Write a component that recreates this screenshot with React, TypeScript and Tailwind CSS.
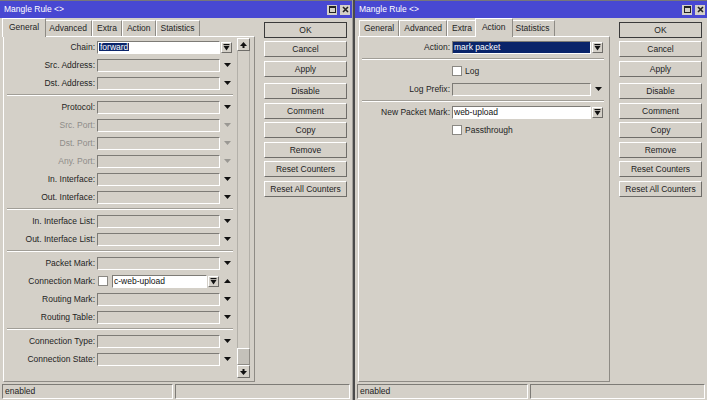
import React from 'react';

type Ctl = 'arrow' | 'arrow-dim' | 'button' | 'up' | 'none';

type Row =
  | { kind: 'field'; label: string; dim?: boolean; control: Ctl; value?: React.ReactNode; white?: boolean; navy?: boolean }
  | { kind: 'conn'; label: string }
  | { kind: 'check'; label: string }
  | { kind: 'div'; h?: string };

const raised = 'border border-t-white border-l-white border-b-[#6f6d69] border-r-[#6f6d69] bg-[#d4d0c8]';
const sunken = 'border border-t-[#7d7b76] border-l-[#7d7b76] border-b-white border-r-white';

const DownArrow = ({ dim }: { dim?: boolean }) => (
  <svg width="7" height="4" viewBox="0 0 7 4">
    <polygon points="0,0 7,0 3.5,4" fill={dim ? '#9a9893' : '#111'} />
  </svg>
);

const UpArrow = () => (
  <svg width="7" height="4" viewBox="0 0 7 4">
    <polygon points="0,4 7,4 3.5,0" fill="#111" />
  </svg>
);

const ComboButton = () => (
  <div className={`mr-[1px] flex h-[11px] w-[11px] items-center justify-center ${raised}`}>
    <svg width="7" height="7" viewBox="0 0 7 7">
      <rect x="0.5" y="0" width="6" height="1.2" fill="#111" />
      <polygon points="0.5,2 6.5,2 3.5,6.5" fill="#111" />
    </svg>
  </div>
);

function Control({ kind }: { kind: Ctl }) {
  if (kind === 'button') return <ComboButton />;
  if (kind === 'none') return null;
  return (
    <span className="flex pr-[2px]">
      {kind === 'up' ? <UpArrow /> : <DownArrow dim={kind === 'arrow-dim'} />}
    </span>
  );
}

const Box = ({ white, navy, children }: { white?: boolean; navy?: boolean; children?: React.ReactNode }) => (
  <div
    className={`flex h-[13px] min-w-0 flex-1 items-center overflow-hidden pl-[1px] ${sunken} ${
      navy ? 'bg-[#0a246a] text-white' : white ? 'bg-white text-[#111]' : 'bg-[#d4d0c8]'
    }`}
  >
    {children}
  </div>
);

const Checkbox = () => <div className="h-[10px] w-[10px] shrink-0 border border-[#8a8883] bg-white" />;

function FormRow({ row }: { row: Row }) {
  if (row.kind === 'div') {
    return (
      <div className={`flex ${row.h ?? 'h-[6px]'} items-center pl-[3px]`}>
        <div className="h-[2px] w-full border-t border-t-[#a19e97] border-b border-b-white" />
      </div>
    );
  }
  if (row.kind === 'check') {
    return (
      <div className="flex h-[18px] items-center pl-[93px]">
        <Checkbox />
        <span className="ml-[3px] text-[#1e1e1e]">{row.label}</span>
      </div>
    );
  }
  const label = (
    <div className={`w-[91px] shrink-0 text-right ${row.kind === 'field' && row.dim ? 'text-[#8e8c88]' : 'text-[#1e1e1e]'}`}>
      {row.label}:
    </div>
  );
  if (row.kind === 'conn') {
    return (
      <div className="flex h-[18px] items-center">
        {label}
        <div className="ml-[3px] flex min-w-0 flex-1 items-center">
          <Checkbox />
          <div className="ml-[4px] flex min-w-0 flex-1 items-center">
            <Box white>c-web-upload</Box>
            <div className="ml-[1px]">
              <ComboButton />
            </div>
          </div>
        </div>
        <div className="flex h-[13px] w-[13px] shrink-0 items-center justify-end">
          <Control kind="up" />
        </div>
      </div>
    );
  }
  return (
    <div className="flex h-[18px] items-center">
      {label}
      <div className="ml-[2px] flex min-w-0 flex-1">
        <Box white={row.white} navy={row.navy}>
          {row.value}
        </Box>
      </div>
      <div className="flex h-[13px] w-[13px] shrink-0 items-center justify-end">
        <Control kind={row.control} />
      </div>
    </div>
  );
}

const generalRows: Row[] = [
  {
    kind: 'field',
    label: 'Chain',
    control: 'button',
    white: true,
    value: <span className="bg-[#0a246a] px-[1px] text-white">forward</span>,
  },
  { kind: 'field', label: 'Src. Address', control: 'arrow' },
  { kind: 'field', label: 'Dst. Address', control: 'arrow' },
  { kind: 'div' },
  { kind: 'field', label: 'Protocol', control: 'arrow' },
  { kind: 'field', label: 'Src. Port', control: 'arrow-dim', dim: true },
  { kind: 'field', label: 'Dst. Port', control: 'arrow-dim', dim: true },
  { kind: 'field', label: 'Any. Port', control: 'arrow-dim', dim: true },
  { kind: 'field', label: 'In. Interface', control: 'arrow' },
  { kind: 'field', label: 'Out. Interface', control: 'arrow' },
  { kind: 'div' },
  { kind: 'field', label: 'In. Interface List', control: 'arrow' },
  { kind: 'field', label: 'Out. Interface List', control: 'arrow' },
  { kind: 'div' },
  { kind: 'field', label: 'Packet Mark', control: 'arrow' },
  { kind: 'conn', label: 'Connection Mark' },
  { kind: 'field', label: 'Routing Mark', control: 'arrow' },
  { kind: 'field', label: 'Routing Table', control: 'arrow' },
  { kind: 'div' },
  { kind: 'field', label: 'Connection Type', control: 'arrow' },
  { kind: 'field', label: 'Connection State', control: 'arrow' },
];

const actionRows: Row[] = [
  { kind: 'field', label: 'Action', control: 'button', navy: true, value: 'mark packet' },
  { kind: 'div' },
  { kind: 'check', label: 'Log' },
  { kind: 'field', label: 'Log Prefix', control: 'arrow' },
  { kind: 'div', h: 'h-[5px]' },
  { kind: 'field', label: 'New Packet Mark', control: 'button', white: true, value: 'web-upload' },
  { kind: 'check', label: 'Passthrough' },
];

const tabs = ['General', 'Advanced', 'Extra', 'Action', 'Statistics'];

const buttons: { label: string; mt: string; primary?: boolean }[] = [
  { label: 'OK', mt: 'mt-[4px]', primary: true },
  { label: 'Cancel', mt: 'mt-[3px]' },
  { label: 'Apply', mt: 'mt-[4px]' },
  { label: 'Disable', mt: 'mt-[6px]' },
  { label: 'Comment', mt: 'mt-[4px]' },
  { label: 'Copy', mt: 'mt-[3px]' },
  { label: 'Remove', mt: 'mt-[4px]' },
  { label: 'Reset Counters', mt: 'mt-[3px]' },
  { label: 'Reset All Counters', mt: 'mt-[4px]' },
];

const ScrollBar = () => (
  <div className="ml-[4px] flex w-[13px] flex-col">
    <div className={`flex h-[13px] items-center justify-center ${raised}`}>
      <svg width="7" height="6" viewBox="0 0 7 6">
        <polygon points="0,4 7,4 3.5,0" fill="#111" />
        <rect x="2.5" y="4" width="2" height="2" fill="#111" />
      </svg>
    </div>
    <div className="flex-1 border-x border-x-[#b3b0a9]" />
    <div className="h-[17px] border border-t-white border-l-white border-b-[#8e8b85] border-r-[#8e8b85] bg-[#c4c1ba]" />
    <div className={`flex h-[13px] items-center justify-center ${raised}`}>
      <svg width="7" height="6" viewBox="0 0 7 6">
        <polygon points="0,2 7,2 3.5,6" fill="#111" />
        <rect x="2.5" y="0" width="2" height="2" fill="#111" />
      </svg>
    </div>
  </div>
);

function Window({ active, rows, scroll }: { active: string; rows: Row[]; scroll?: boolean }) {
  return (
    <div className="flex h-[400px] w-[352px] shrink-0 flex-col">
      {/* Title bar */}
      <div className="flex h-[18px] items-center border-t border-t-[#77767a] bg-[#4848d2] pl-[4px] pr-[2px] text-white">
        <span className="flex-1">Mangle Rule &lt;&gt;</span>
        <div className="flex h-[10px] w-[10px] items-center justify-center bg-[#d4d0c8]">
          <div className="h-[7px] w-[7px] border border-[#222] border-t-2" />
        </div>
        <div className="ml-[3px] flex h-[10px] w-[10px] items-center justify-center bg-[#d4d0c8]">
          <svg width="7" height="7" viewBox="0 0 7 7">
            <path d="M1 1 L6 6 M6 1 L1 6" stroke="#222" strokeWidth="1.6" />
          </svg>
        </div>
      </div>

      {/* Body */}
      <div className="flex h-[365px]">
        <div className="ml-[3px] flex w-[252px] flex-col pb-[1px]">
          <div className="flex h-[18px] items-end pl-[1px] text-[#1e1e1e]">
            {tabs.map((t) =>
              t === active ? (
                <div
                  key={t}
                  className="relative z-10 -mx-[2px] -mb-[1px] flex h-[19px] items-center border-t border-l border-r border-t-white border-l-white border-r-[#8e8b85] bg-[#d4d0c8] px-[6px] pb-[1px]"
                >
                  {t}
                </div>
              ) : (
                <div
                  key={t}
                  className="flex h-[16px] items-center border-t border-l border-r border-t-white border-l-white border-r-[#8e8b85] bg-[#d2cec6] px-[4px]"
                >
                  {t}
                </div>
              )
            )}
          </div>
          <div className="flex flex-1 border border-t-white border-l-white border-b-[#8e8b85] border-r-[#8e8b85] pt-[1px] pb-[3px]">
            <div className={`flex flex-col ${scroll ? 'w-[229px]' : 'w-[245px]'}`}>{rows.map((r, i) => <FormRow key={i} row={r} />)}</div>
            {scroll && <ScrollBar />}
          </div>
        </div>
        <div className="ml-[9px] flex w-[83px] flex-col">
          {buttons.map((b) => (
            <div
              key={b.label}
              className={`${b.mt} flex h-[16px] items-center justify-center text-[#222] ${
                b.primary ? 'border border-[#3a3a3a] bg-[#d4d0c8]' : raised
              }`}
            >
              {b.label}
            </div>
          ))}
        </div>
      </div>

      {/* Status bar */}
      <div className="flex h-[17px] gap-[2px] px-[2px] pt-[1px]">
        <div className={`flex h-[15px] w-[171px] items-center pl-[2px] text-[#222] ${sunken}`}>enabled</div>
        <div className={`h-[15px] flex-1 ${sunken}`} />
      </div>
    </div>
  );
}

export default function App() {
  return (
    <div className="flex h-[400px] w-[707px] overflow-hidden bg-[#d4d0c8] font-['Liberation_Sans',Arial,sans-serif] text-[8.5px] leading-none">
      <Window active="General" rows={generalRows} scroll />
      <div className="flex w-[3px] shrink-0">
        <div className="w-[1px] bg-[#a09e99]" />
        <div className="w-[2px] bg-[#4a4a4a]" />
      </div>
      <Window active="Action" rows={actionRows} />
    </div>
  );
}
